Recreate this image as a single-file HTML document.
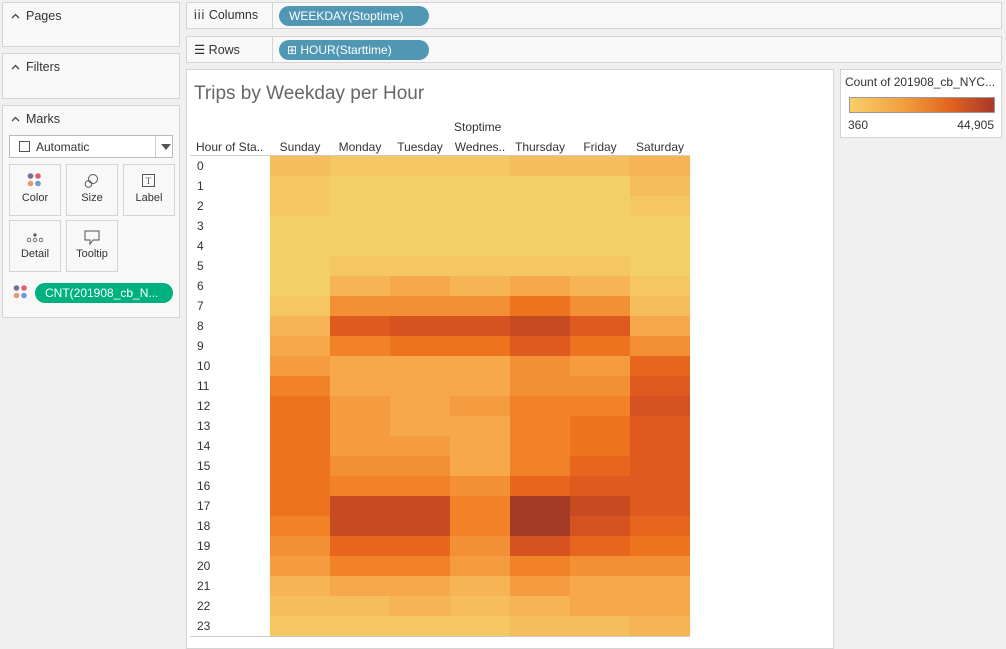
<!DOCTYPE html><html><head><style>
body{margin:0;width:1006px;height:647px;background:#f0f0f0;font-family:"Liberation Sans",sans-serif;font-size:12px;color:#333;position:relative;overflow:hidden}
.a{position:absolute;box-sizing:border-box}
.card{background:#f8f8f8;border:1px solid #d4d4d4}
.h{position:absolute;left:8px;top:6px;font-size:12.5px}
.h svg{margin-right:6px;vertical-align:1px}
.btn{position:absolute;width:50px;height:50px;border:1px solid #d4d4d4;background:#f8f8f8;text-align:center;font-size:11px}
.btn span{position:absolute;left:0;right:0;bottom:11px}
.pill{position:absolute;height:20px;border-radius:10px;color:#fff;font-size:12px;line-height:20px;padding-left:10px;box-sizing:border-box}
.lbl{position:absolute;font-size:12px;color:#333}
</style></head><body>
<div class="a card" style="left:2px;top:2px;width:178px;height:45px"><div class="h"><svg width="9" height="6"><path d="M1 5L4.5 1.5L8 5" fill="none" stroke="#444" stroke-width="1.3"/></svg>Pages</div></div>
<div class="a card" style="left:2px;top:53px;width:178px;height:46px"><div class="h"><svg width="9" height="6"><path d="M1 5L4.5 1.5L8 5" fill="none" stroke="#444" stroke-width="1.3"/></svg>Filters</div></div>
<div class="a card" style="left:2px;top:105px;width:178px;height:213px"><div class="h"><svg width="9" height="6"><path d="M1 5L4.5 1.5L8 5" fill="none" stroke="#444" stroke-width="1.3"/></svg>Marks</div>
<div class="a" style="left:6px;top:29px;width:164px;height:23px;border:1px solid #bbb;background:#fff"><span style="position:absolute;left:9px;top:5px;width:9px;height:9px;border:1px solid #555"></span><span style="position:absolute;left:26px;top:4px;font-size:12px">Automatic</span><span style="position:absolute;left:145px;top:0;height:21px;border-left:1px solid #ccc"></span><span style="position:absolute;left:151px;top:8px;border:5px solid transparent;border-top:6px solid #555"></span></div>
<div class="btn" style="left:6px;top:58px"><svg style="position:absolute;left:17px;top:8px" width="16" height="14"><circle cx="3.5" cy="3" r="2.8" fill="#7b6a9a"/><circle cx="11" cy="3" r="2.8" fill="#e15f6f"/><circle cx="3.5" cy="10.5" r="2.8" fill="#e39b6c"/><circle cx="11" cy="10.5" r="2.8" fill="#6b9bd1"/></svg><span>Color</span></div>
<div class="btn" style="left:63px;top:58px"><svg style="position:absolute;left:17px;top:8px" width="16" height="16"><circle cx="9" cy="6" r="4.5" fill="none" stroke="#555"/><circle cx="4.5" cy="11" r="3.3" fill="none" stroke="#555"/></svg><span>Size</span></div>
<div class="btn" style="left:120px;top:58px"><svg style="position:absolute;left:18px;top:9px" width="14" height="14"><rect x=".5" y=".5" width="12" height="12" fill="none" stroke="#555"/><text x="6.5" y="10" font-size="9" text-anchor="middle" fill="#555" font-family="Liberation Serif">T</text></svg><span>Label</span></div>
<div class="btn" style="left:6px;top:114px"><svg style="position:absolute;left:16px;top:12px" width="18" height="10"><circle cx="9" cy="2" r="1.6" fill="#555"/><circle cx="3" cy="7" r="1.8" fill="none" stroke="#555" stroke-width=".8"/><circle cx="9" cy="7" r="1.8" fill="none" stroke="#555" stroke-width=".8"/><circle cx="15" cy="7" r="1.8" fill="none" stroke="#555" stroke-width=".8"/></svg><span>Detail</span></div>
<div class="btn" style="left:63px;top:114px"><svg style="position:absolute;left:17px;top:9px" width="16" height="16"><path d="M1 1H15V10H9L6 14V10H1Z" fill="none" stroke="#555"/></svg><span>Tooltip</span></div>
<svg style="position:absolute;left:10px;top:179px" width="15" height="15"><circle cx="3.5" cy="3" r="2.8" fill="#7b6a9a"/><circle cx="11" cy="3" r="2.8" fill="#e15f6f"/><circle cx="3.5" cy="10.5" r="2.8" fill="#e39b6c"/><circle cx="11" cy="10.5" r="2.8" fill="#6b9bd1"/></svg>
<div class="pill" style="left:32px;top:177px;width:138px;background:#00b180">CNT(201908_cb_N...</div>
</div>
<div class="a card" style="left:186px;top:2px;width:816px;height:27px"><span style="position:absolute;left:85px;top:0;height:25px;border-left:1px solid #d4d4d4"></span><span class="lbl" style="left:7px;top:5px;font-size:12.5px"><b style="font-weight:normal;letter-spacing:1px">iii</b> Columns</span><div class="pill" style="left:92px;top:3px;width:150px;background:#4f97b3">WEEKDAY(Stoptime)</div></div>
<div class="a card" style="left:186px;top:36px;width:816px;height:27px"><span style="position:absolute;left:85px;top:0;height:25px;border-left:1px solid #d4d4d4"></span><span class="lbl" style="left:7px;top:5px;font-size:12.5px">☰ Rows</span><div class="pill" style="left:92px;top:3px;width:150px;background:#4f97b3;padding-left:8px">⊞ HOUR(Starttime)</div></div>
<div class="a" style="left:186px;top:69px;width:648px;height:580px;background:#fff;border:1px solid #d4d4d4"></div>
<div class="lbl" style="left:194px;top:83px;font-size:19px;color:#666">Trips by Weekday per Hour</div>
<div class="lbl" style="left:454px;top:120px">Stoptime</div>
<div class="lbl" style="left:196px;top:140px">Hour of Sta..</div>
<div id="cols"></div>
<div class="a" style="left:190px;top:155px;width:500px;border-top:1px solid #ccc"></div>
<div id="g" class="a" style="left:270px;top:156px;width:420px;height:480px"></div>
<div class="a" style="left:190px;top:636px;width:500px;border-top:1px solid #ccc"></div>
<div class="a" style="left:840px;top:69px;width:162px;height:69px;background:#fff;border:1px solid #d4d4d4">
<div class="lbl" style="left:4px;top:5px">Count of 201908_cb_NYC...</div>
<div class="a" style="left:8px;top:27px;width:146px;height:16px;border:1px solid #999;background:linear-gradient(90deg,#f8cf6a,#f19a3c 40%,#e0631f 70%,#a8392a)"></div>
<div class="lbl" style="left:7px;top:48px">360</div><div class="lbl" style="right:7px;top:48px">44,905</div></div>
<script>
var P=["#f3cf68","#f5c762","#f6bd5d","#f7b455","#f7a84b","#f59c40","#f38f34","#f18228","#ee731f","#e8651d","#e05a1f","#d65220","#c64a22","#a33a23"];
var D=[[2,1,1,1,2,2,3],[1,0,0,0,0,0,2],[1,0,0,0,0,0,1],[0,0,0,0,0,0,0],[0,0,0,0,0,0,0],[0,1,1,1,1,1,0],[0,3,4,3,4,3,1],[1,6,6,6,8,6,2],[3,10,11,11,12,10,4],[4,7,8,8,10,8,6],[5,4,4,4,6,5,9],[7,4,4,4,6,6,10],[8,5,4,5,7,7,11],[8,5,4,4,7,8,10],[8,5,5,4,7,8,10],[8,6,6,4,7,9,10],[8,7,7,6,9,10,10],[8,12,12,7,13,12,10],[7,12,12,7,13,11,9],[6,9,9,6,11,9,8],[5,7,7,5,7,6,6],[3,4,4,3,5,4,4],[2,2,3,2,3,4,4],[1,1,1,1,2,2,3]];
var h="",c="";
D.forEach(function(r,i){r.forEach(function(v,j){h+='<div class="a" style="left:'+j*60+'px;top:'+i*20+'px;width:60px;height:20px;background:'+P[v]+'"></div>'});c+='<div class="lbl" style="left:197px;top:'+(159+i*20)+'px">'+i+'</div>'});
document.getElementById("g").innerHTML=h;
var n=["Sunday","Monday","Tuesday","Wednes..","Thursday","Friday","Saturday"];
n.forEach(function(s,j){c+='<div class="lbl" style="left:'+(270+j*60)+'px;width:60px;text-align:center;top:140px">'+s+'</div>'});
document.getElementById("cols").innerHTML=c;
</script>
</body></html>
